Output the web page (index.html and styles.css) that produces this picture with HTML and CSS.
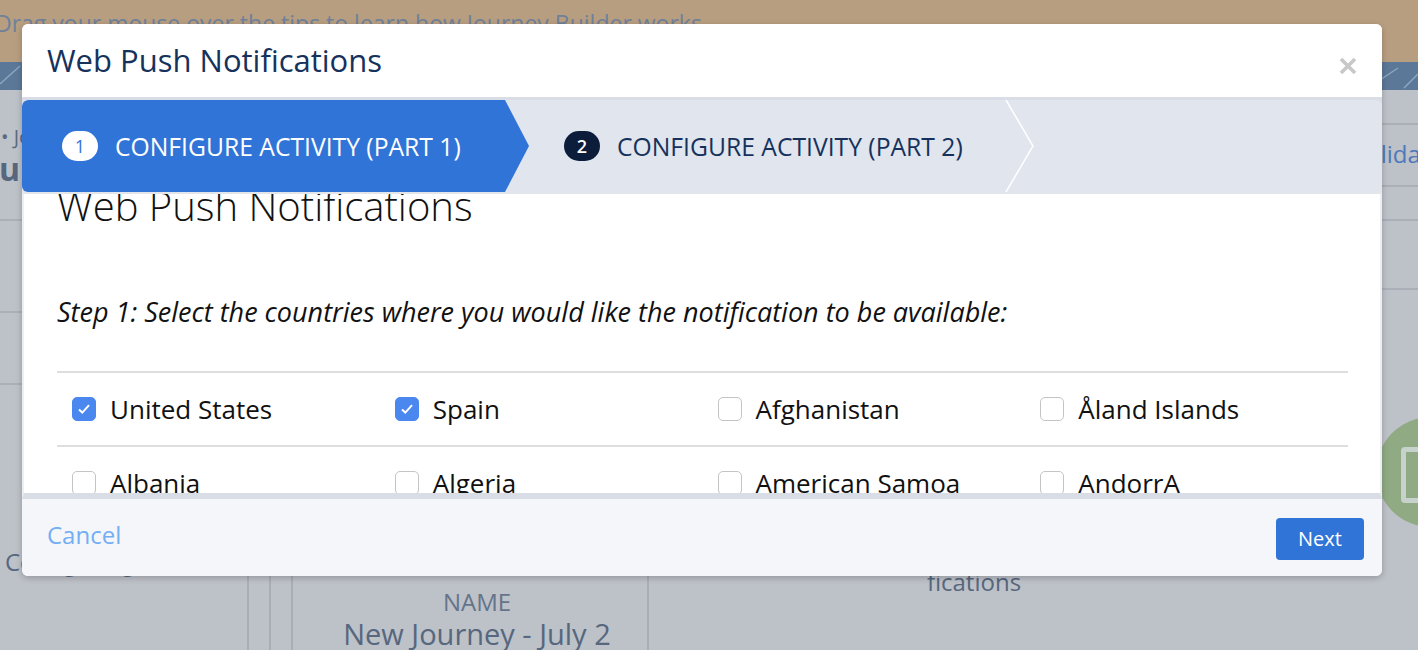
FILE: index.html
```html
<!DOCTYPE html>
<html lang="en">
<head>
<meta charset="utf-8">
<title>Web Push Notifications</title>
<link rel="stylesheet" href="styles.css">
</head>
<body>
<div class="app">
  <div class="banner"><p class="banner-text">Drag your mouse over the tips to learn how Journey Builder works</p></div>
  <div class="nav">
    <svg class="nav-deco" width="1418" height="28" viewBox="0 0 1418 28">
      <line x1="0" y1="22" x2="20" y2="4" stroke="#8fa6bf" stroke-width="1.5"/>
      <line x1="1380" y1="18" x2="1398" y2="6" stroke="#8fa6bf" stroke-width="1.5"/>
      <line x1="1404" y1="26" x2="1418" y2="12" stroke="#8fa6bf" stroke-width="1.5"/>
    </svg>
  </div>
  <div class="main">
    <div class="left-col">
      <div class="lc-head">
        <div class="lc-crumb">• Journeys</div>
        <div class="lc-name">Nu</div>
      </div>
      <div class="lc-row lc-row-a"></div>
      <div class="lc-row lc-row-b"></div>
      <div class="lc-foot">Configuring</div>
    </div>
    <div class="thin-col"></div>
    <div class="thin-col"></div>
    <div class="card-col">
      <div class="card-label">NAME</div>
      <div class="card-value">New Journey - July 2</div>
    </div>
    <div class="canvas">
      <div class="node-label">Web Push Noti<wbr>fications</div>
    </div>
    <div class="right-col">
      <div class="rc-row rc-a"></div>
      <div class="rc-row rc-b"><span class="validate">Validate</span></div>
      <div class="rc-row rc-c"></div>
      <div class="rc-row rc-d"></div>
      <div class="node-circle"><span class="node-icon"></span></div>
    </div>
  </div>
</div>

<div class="modal">
  <div class="modal-header">
    <h2 class="modal-title">Web Push Notifications</h2>
    <svg class="close" width="18" height="18" viewBox="0 0 18 18">
      <path d="M2 2 L16 16 M16 2 L2 16" stroke="#c8c8c8" stroke-width="3.6" stroke-linecap="butt"/>
    </svg>
  </div>
  <div class="path-wrap">
    <div class="path">
      <div class="step step-active">
        <span class="step-num num-active">1</span>
        <span class="step-label">CONFIGURE ACTIVITY (PART 1)</span>
      </div>
      <div class="step step-next">
        <span class="step-num num-next">2</span>
        <span class="step-label">CONFIGURE ACTIVITY (PART 2)</span>
      </div>
      <svg class="chevron" width="30" height="92" viewBox="0 0 30 92">
        <polyline points="1,0 28,46 1,92" fill="none" stroke="#ffffff" stroke-width="1.5"/>
      </svg>
    </div>
  </div>
  <div class="modal-body">
    <div class="body-inner">
      <h1 class="body-title">Web Push Notifications</h1>
      <p class="instructions">Step 1: Select the countries where you would like the notification to be available:</p>
      <div class="country-grid">
        <label class="country"><span class="cb checked"><svg width="14" height="12" viewBox="0 0 14 12"><path d="M2 6.5 L5.3 9.6 L12 2.2" fill="none" stroke="#fff" stroke-width="2"/></svg></span>United States</label>
        <label class="country"><span class="cb checked"><svg width="14" height="12" viewBox="0 0 14 12"><path d="M2 6.5 L5.3 9.6 L12 2.2" fill="none" stroke="#fff" stroke-width="2"/></svg></span>Spain</label>
        <label class="country"><span class="cb"></span>Afghanistan</label>
        <label class="country"><span class="cb"></span>Åland Islands</label>
        <label class="country"><span class="cb"></span>Albania</label>
        <label class="country"><span class="cb"></span>Algeria</label>
        <label class="country"><span class="cb"></span>American Samoa</label>
        <label class="country"><span class="cb"></span>AndorrA</label>
      </div>
    </div>
  </div>
  <div class="modal-footer">
    <span class="cancel">Cancel</span>
    <button class="next">Next</button>
  </div>
</div>
</body>
</html>
```

FILE: styles.css
```css
* { box-sizing: border-box; }
html, body { margin: 0; padding: 0; }
body {
  width: 1418px;
  height: 650px;
  overflow: hidden;
  position: relative;
  font-family: "Open Sans", "Noto Sans", sans-serif;
  background: #bdc1c8;
}
.app { width: 1418px; height: 650px; overflow: hidden; }
.banner {
  height: 62px;
  background: #b89e80;
  overflow: hidden;
}
.banner-text {
  margin: 0 0 0 -5px;
  padding-top: 9px;
  font-size: 23px;
  line-height: 28px;
  color: #6f819a;
  white-space: nowrap;
}
.nav { height: 28px; background: #5b7898; }
.nav-deco { display: block; }
.main { display: flex; height: 560px; }
.left-col {
  width: 249px;
  flex: none;
  border-right: 2px solid #a9aeb6;
  display: flex;
  flex-direction: column;
}
.lc-head {
  height: 131px;
  border-bottom: 2px solid #abb0b8;
  padding-top: 34px;
  color: #5a6b82;
  overflow: hidden;
}
.lc-crumb { font-size: 20px; line-height: 26px; margin-left: 1px; white-space: nowrap; }
.lc-name { font-size: 32px; line-height: 38px; font-weight: 700; margin-left: -27px; color: #56677e; }
.lc-row { border-bottom: 2px solid #abb0b8; }
.lc-row-a { height: 92px; }
.lc-row-b { height: 72px; }
.lc-foot {
  padding-top: 162px;
  padding-left: 5px;
  font-size: 24px;
  line-height: 30px;
  color: #56677e;
}
.thin-col { width: 22px; flex: none; border-right: 2px solid #a9aeb6; }
.card-col {
  width: 356px;
  flex: none;
  border-right: 2px solid #a9aeb6;
  text-align: center;
  padding-top: 497px;
  padding-left: 14px;
  color: #56677e;
}
.card-label { font-size: 24px; line-height: 30px; color: #64748a; }
.card-value { font-size: 29px; line-height: 34px; white-space: nowrap; }
.canvas {
  flex: 1;
  padding-top: 447px;
  padding-left: 230px;
}
.node-label {
  width: 190px;
  font-size: 24px;
  line-height: 30px;
  color: #56677e;
  text-align: center;
}
.right-col {
  width: 60px;
  flex: none;
  overflow: hidden;
}
.rc-row { border-bottom: 2px solid #abb0b8; }
.rc-a { height: 35px; }
.rc-b { height: 62px; padding-top: 15px; white-space: nowrap; }
.rc-c { height: 34px; }
.rc-d { height: 69px; }
.validate { font-size: 24px; line-height: 28px; color: #4d79ba; margin-left: -5px; display: inline-block; }
.node-circle {
  margin-top: 127px;
  margin-left: 18px;
  width: 110px;
  height: 110px;
  border-radius: 50%;
  background: #90ab84;
  padding: 30px 0 0 25px;
}
.node-icon {
  display: block;
  width: 40px;
  height: 56px;
  border: 5px solid #c8d2cc;
  border-radius: 4px;
}

/* Modal */
.modal {
  position: absolute;
  left: 22px;
  top: 24px;
  width: 1360px;
  height: 552px;
  border-radius: 6px;
  overflow: hidden;
  background: #f4f6f9;
  box-shadow: 0 2px 6px rgba(0,0,0,0.22);
  display: flex;
  flex-direction: column;
}
.modal-header {
  height: 73px;
  flex: none;
  background: #fff;
  display: flex;
  align-items: center;
  justify-content: space-between;
  padding: 0 25px 0 25px;
}
.modal-title {
  margin: 0;
  font-size: 31px;
  font-weight: 400;
  color: #16325c;
  padding-bottom: 2px;
}
.close { margin-top: 10px; }
.path-wrap {
  flex: none;
  background: #d8dde6;
  padding-top: 3px;
}
.path {
  height: 92px;
  background: #e0e5ee;
  border-radius: 6px 6px 0 0;
  display: flex;
  overflow: hidden;
}
.step {
  display: flex;
  align-items: center;
  height: 92px;
  flex: none;
}
.step-active {
  width: 507px;
  background: #3174d8;
  clip-path: polygon(0 0, calc(100% - 24px) 0, 100% 50%, calc(100% - 24px) 100%, 0 100%);
  padding-left: 40px;
  color: #fff;
  border-radius: 6px 0 0 6px;
}
.step-next {
  width: 476px;
  padding-left: 35px;
  color: #16325c;
}
.chevron { display: block; flex: none; }
.step-num {
  width: 36px;
  height: 30px;
  border-radius: 15px;
  display: flex;
  align-items: center;
  justify-content: center;
  font-size: 18px;
  flex: none;
  margin-right: 17px;
}
.num-active { background: #fff; color: #3174d8; }
.num-next { background: #0c1d3b; color: #fff; font-weight: 600; }
.step-label { font-size: 24.7px; white-space: nowrap; }

.modal-body {
  height: 307px;
  flex: none;
  background: #fff;
  overflow: hidden;
  border-top: 2px solid #e2e5ea;
  border-left: 2px solid #eceef1;
  border-right: 2px solid #eceef1;
  border-bottom: 6px solid #d8dde6;
}
.body-inner { padding: 0 32px 0 33px; }
.body-title {
  margin: -12px 0 0 0;
  font-size: 40px;
  font-weight: 300;
  line-height: 48px;
  color: #111;
  white-space: nowrap;
}
.instructions {
  margin: 64px 0 0 0;
  font-style: italic;
  font-size: 27px;
  line-height: 36px;
  color: #111;
  white-space: nowrap;
}
.country-grid {
  margin-top: 41px;
  display: grid;
  grid-template-columns: repeat(4, 1fr);
  border-top: 2px solid #dedede;
}
.country {
  display: flex;
  align-items: center;
  height: 74px;
  padding-left: 15px;
  font-size: 26px;
  color: #111;
  border-bottom: 2px solid #dedede;
  white-space: nowrap;
}
.cb {
  width: 24px;
  height: 24px;
  border: 1px solid #c4c4c4;
  border-radius: 5px;
  background: #fff;
  margin-right: 14px;
  flex: none;
  display: flex;
  align-items: center;
  justify-content: center;
}
.cb.checked { background: #4a87ef; border-color: #4a87ef; }
.cb svg { display: block; }

.modal-footer {
  flex: 1;
  display: flex;
  align-items: center;
  justify-content: space-between;
  padding: 0 18px 0 25px;
  background: #f4f6f9;
}
.cancel { font-size: 24px; color: #73aef5; margin-top: -7px; }
.next {
  width: 88px;
  height: 42px;
  border: 0;
  border-radius: 4px;
  background: #3174d8;
  color: #fff;
  font-family: "Open Sans", "Noto Sans", sans-serif;
  font-size: 20px;
  padding: 0;
  margin-top: 2px;
}
```
